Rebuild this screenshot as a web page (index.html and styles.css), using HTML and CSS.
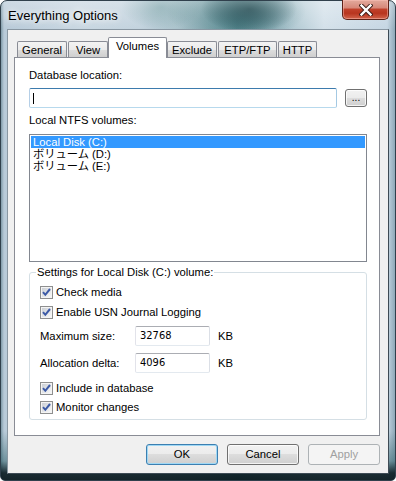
FILE: index.html
```html
<!DOCTYPE html>
<html>
<head>
<meta charset="utf-8">
<link rel="stylesheet" href="styles.css">
</head>
<body>
<div class="window">
  <div class="titlebar">
    <span class="title">Everything Options</span>
    <button class="close" aria-label="Close">
      <svg width="14" height="12" viewBox="0 0 14 12">
        <path d="M2.5 1.5 L11.5 10.5 M11.5 1.5 L2.5 10.5" stroke="#3b1c16" stroke-width="4.2" stroke-linecap="square"/>
        <path d="M2.5 1.5 L11.5 10.5 M11.5 1.5 L2.5 10.5" stroke="#ffffff" stroke-width="2.4" stroke-linecap="square"/>
      </svg>
    </button>
  </div>
  <div class="client">
    <div class="tabs">
      <div class="tab tab-general">General</div>
      <div class="tab tab-view">View</div>
      <div class="tab tab-volumes active">Volumes</div>
      <div class="tab tab-exclude">Exclude</div>
      <div class="tab tab-etp">ETP/FTP</div>
      <div class="tab tab-http">HTTP</div>
    </div>
    <div class="panel">
      <div class="label first">Database location:</div>
      <div class="path-row">
        <div class="textbox focused"><span class="caret"></span></div>
        <button class="btn browse">...</button>
      </div>
      <div class="label second">Local NTFS volumes:</div>
      <div class="listbox">
        <div class="item selected">Local Disk (C:)</div>
        <div class="item">ボリューム (D:)</div>
        <div class="item">ボリューム (E:)</div>
      </div>
      <fieldset class="group">
        <legend>Settings for Local Disk (C:) volume:</legend>
        <div class="group-body">
          <div class="check row-a">
            <svg class="cb" width="13" height="13" viewBox="0 0 13 13"><rect x="0.5" y="0.5" width="12" height="12" fill="#f4f4f4" stroke="#8e8f8f"/><rect x="2" y="2" width="9" height="9" fill="url(#g)"/><path d="M3 6.2 L5.3 8.8 L10 3" fill="none" stroke="#3c5aa6" stroke-width="2"/><defs><linearGradient id="g" x1="0" y1="0" x2="1" y2="1"><stop offset="0" stop-color="#cbcfd5"/><stop offset="1" stop-color="#f7f7f7"/></linearGradient></defs></svg>
            <span>Check media</span>
          </div>
          <div class="check row-b">
            <svg class="cb" width="13" height="13" viewBox="0 0 13 13"><rect x="0.5" y="0.5" width="12" height="12" fill="#f4f4f4" stroke="#8e8f8f"/><rect x="2" y="2" width="9" height="9" fill="url(#g)"/><path d="M3 6.2 L5.3 8.8 L10 3" fill="none" stroke="#3c5aa6" stroke-width="2"/></svg>
            <span>Enable USN Journal Logging</span>
          </div>
          <div class="field row-c">
            <span class="field-label">Maximum size:</span>
            <div class="textbox num">32768</div>
            <span class="unit">KB</span>
          </div>
          <div class="field row-d">
            <span class="field-label">Allocation delta:</span>
            <div class="textbox num">4096</div>
            <span class="unit">KB</span>
          </div>
          <div class="check row-e">
            <svg class="cb" width="13" height="13" viewBox="0 0 13 13"><rect x="0.5" y="0.5" width="12" height="12" fill="#f4f4f4" stroke="#8e8f8f"/><rect x="2" y="2" width="9" height="9" fill="url(#g)"/><path d="M3 6.2 L5.3 8.8 L10 3" fill="none" stroke="#3c5aa6" stroke-width="2"/></svg>
            <span>Include in database</span>
          </div>
          <div class="check row-f">
            <svg class="cb" width="13" height="13" viewBox="0 0 13 13"><rect x="0.5" y="0.5" width="12" height="12" fill="#f4f4f4" stroke="#8e8f8f"/><rect x="2" y="2" width="9" height="9" fill="url(#g)"/><path d="M3 6.2 L5.3 8.8 L10 3" fill="none" stroke="#3c5aa6" stroke-width="2"/></svg>
            <span>Monitor changes</span>
          </div>
        </div>
      </fieldset>
    </div>
    <div class="buttons">
      <button class="btn dlg default">OK</button>
      <button class="btn dlg">Cancel</button>
      <button class="btn dlg disabled">Apply</button>
    </div>
  </div>
</div>
</body>
</html>
```
FILE: styles.css
```css
* { box-sizing: border-box; }
html, body {
  margin: 0;
  padding: 0;
  background: #ffffff;
}
body {
  width: 396px;
  height: 481px;
  font-family: "Liberation Sans", Arial, "Noto Sans CJK JP", sans-serif;
  font-size: 11.25px;
  color: #000;
}
.window {
  width: 396px;
  height: 481px;
  border: 1px solid #30404c;
  border-radius: 7px 7px 5px 5px;
  padding: 0 6px 6px 6px;
  display: flex;
  flex-direction: column;
  background:
    linear-gradient(180deg, rgba(255,255,255,0.3) 0px, rgba(255,255,255,0) 28px),
    linear-gradient(180deg, rgba(0,0,0,0) 0px, rgba(0,0,0,0) 430px, rgba(40,90,98,0.5) 460px, rgba(12,30,36,0.92) 472px, rgba(10,25,30,0.95) 481px),
    radial-gradient(ellipse 48px 24px at 248px 8px, rgba(14,58,66,0.95), rgba(20,72,80,0) 100%),
    radial-gradient(ellipse 70px 30px at 235px 10px, rgba(40,100,108,0.7), rgba(40,100,108,0) 100%),
    radial-gradient(ellipse 40px 22px at 160px 6px, rgba(90,140,145,0.55), rgba(90,140,145,0) 100%),
    linear-gradient(90deg, #7f9aa8 0px, #b8cad8 3px, #c9d7e2 20%, #c3d3de 35%, #9dbac2 50%, #6a989e 60%, #a8c3cc 72%, #d4e1ea 82%, #c5d6e3 98%, #8fa9b8 100%);
}
.titlebar {
  height: 28px;
  display: flex;
  justify-content: space-between;
  align-items: flex-start;
}
.title {
  font-size: 13px;
  line-height: 15px;
  padding: 7px 0 0 1px;
  color: #000;
  text-shadow: 0 0 6px rgba(255,255,255,0.95), 0 0 10px rgba(255,255,255,0.8);
}
.close {
  width: 47px;
  height: 20px;
  margin-top: -1px;
  padding: 0;
  border: 1px solid #5e2218;
  border-top: none;
  border-radius: 0 0 5px 5px;
  display: flex;
  align-items: center;
  justify-content: center;
  background: linear-gradient(180deg, #e3aa9d 0%, #d7897a 40%, #c0402a 50%, #b8351f 70%, #d2644c 100%);
  box-shadow: inset 0 0 0 1px rgba(255,200,190,0.45);
}
.client {
  flex: 1;
  background: #f0f0f0;
  border: 1px solid #5d6c77;
  border-color: #8997a2 #3e4b55 #3e4b55 #8997a2;
  padding: 7px 8px 8px 6px;
  display: flex;
  flex-direction: column;
}
.tabs {
  display: flex;
  align-items: flex-end;
  height: 20px;
  padding-left: 3px;
  position: relative;
  z-index: 1;
}
.tab {
  height: 16px;
  border: 1px solid #898c95;
  border-bottom: none;
  background: linear-gradient(180deg, #f3f3f3 0%, #ebebeb 50%, #dddddd 51%, #cfcfcf 100%);
  text-align: center;
  line-height: 16px;
  border-radius: 2px 2px 0 0;
  white-space: nowrap;
}
.tab.active {
  height: 21px;
  margin-bottom: -1px;
  background: #ffffff;
  line-height: 17px;
}
.tab-general { width: 50px; margin-right: 1px; }
.tab-view { width: 40px; }
.tab-volumes { width: 59px; }
.tab-exclude { width: 50px; margin-right: 1px; }
.tab-etp { width: 59px; margin-right: 1px; }
.tab-http { width: 39px; }
.panel {
  height: 379px;
  background: #ffffff;
  border: 1px solid #898c95;
  padding: 0 12px 0 14px;
  display: flex;
  flex-direction: column;
}
.label {
  line-height: 14px;
  height: 14px;
}
.label.first { margin-top: 10px; }
.label.second { margin-top: 5px; }
.path-row {
  margin-top: 6px;
  display: flex;
  align-items: center;
  gap: 8px;
  height: 20px;
}
.textbox {
  height: 20px;
  background: #fff;
  border: 1px solid #abadb3;
  border-color: #abadb3 #dbdfe6 #e3e9ef #e2e3ea;
  border-radius: 2px;
}
.textbox.focused {
  flex: 1;
  border-color: #3d7bad #a4c9e3 #b7d9ed #b5cfe7;
  padding: 3px 0 0 3px;
}
.caret {
  display: block;
  width: 1px;
  height: 11px;
  background: #000;
  margin-top: 1px;
}
.btn {
  font-family: inherit;
  font-size: inherit;
  color: #000;
  border: 1px solid #707070;
  border-radius: 3px;
  background: linear-gradient(180deg, #f2f2f2 0%, #ebebeb 49%, #dddddd 50%, #cfcfcf 100%);
  box-shadow: inset 0 0 0 1px rgba(255,255,255,0.75);
  padding: 0;
}
.browse {
  width: 22px;
  height: 18px;
  line-height: 12px;
  font-size: 10px;
}
.listbox {
  margin-top: 7px;
  height: 128px;
  border: 1px solid #828790;
  padding: 1px;
  background: #fff;
}
.item {
  height: 12px;
  line-height: 12px;
  padding-left: 2px;
  white-space: nowrap;
}
.item.selected {
  background: #3399ff;
  color: #fff;
}
.group {
  margin: 3px 0 0 0;
  padding: 0;
  border: 1px solid #d5dfe5;
  border-radius: 3px;
  height: 155px;
  min-width: 0;
}
.group legend {
  padding: 0 1px;
  margin-left: 6px;
  line-height: 14px;
  height: 14px;
}
.group-body {
  padding: 0 0 0 10px;
  display: flex;
  flex-direction: column;
}
.check {
  display: flex;
  align-items: center;
  gap: 3px;
  height: 13px;
  line-height: 13px;
}
.cb { flex: none; display: block; }
.row-a { margin-top: 7px; }
.row-b { margin-top: 7px; }
.row-c { margin-top: 7px; }
.row-d { margin-top: 7px; }
.row-e { margin-top: 9px; }
.row-f { margin-top: 6px; }
.field {
  display: flex;
  align-items: center;
  height: 20px;
}
.field-label {
  width: 95px;
}
.textbox.num {
  width: 75px;
  padding: 0 0 0 4px;
  line-height: 18px;
  font-family: "DejaVu Sans Condensed", "Liberation Sans Narrow", "Liberation Sans", sans-serif;
  font-size: 11px;
}
.unit {
  margin-left: 8px;
}
.buttons {
  margin-top: 8px;
  display: flex;
  justify-content: flex-end;
  gap: 9px;
}
.dlg {
  width: 72px;
  height: 21px;
  line-height: 17px;
}
.dlg.default {
  border-color: #3c7fb1;
  box-shadow: inset 0 0 0 1px #9fd8f5;
}
.dlg.disabled {
  color: #a0a0a0;
  border-color: #adb2b5;
  background: #f4f4f4;
  box-shadow: none;
}
```
